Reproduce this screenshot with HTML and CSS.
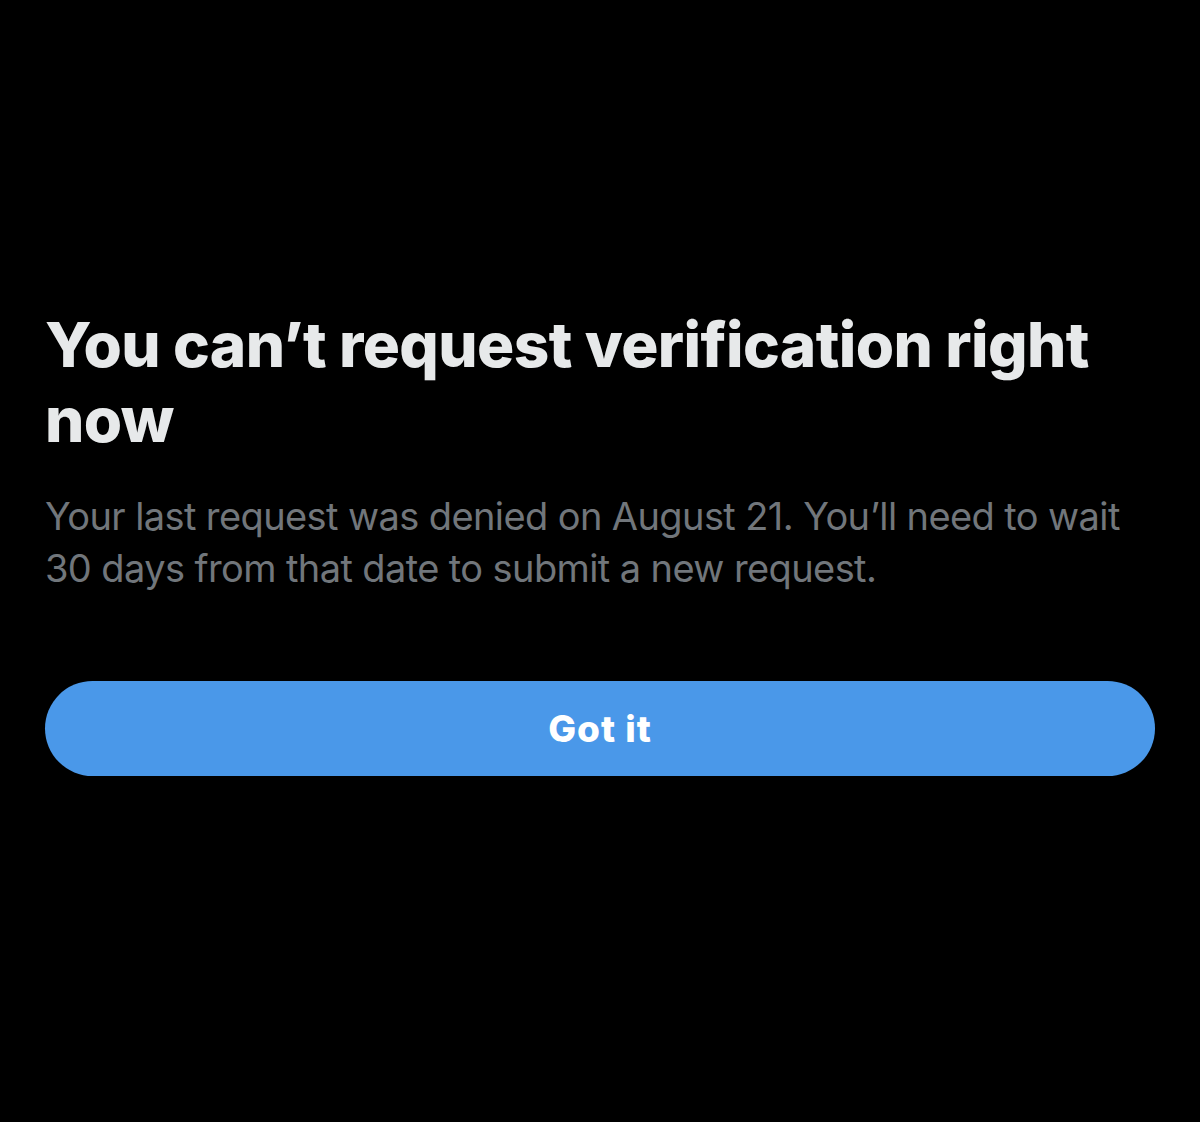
FILE: index.html
```html
<!DOCTYPE html>
<html lang="en">
  <head>
    <meta charset="UTF-8" />
    <title>Verification</title>
    <meta name="viewport" content="width=device-width, initial-scale=1.0" />
    <link rel="stylesheet" href="styles.css">
  </head>
  <body>
    <div class="vr-sheet">
      <h1 class="vr-title">You can’t request verification right now</h1>
      <p class="vr-text">
        Your last request was denied on August 21. You’ll need to wait 30 days
        from that date to submit a new request.
      </p>
      <button class="vr-btn">Got it</button>
    </div>
  </body>
</html>
```

FILE: styles.css
```css
html,
body {
  margin: 0;
  background: #000;
}
.vr-sheet {
  display: flex;
  flex-direction: column;
  padding: 307px 45px 0 45px;
  font-family: "Inter", "Liberation Sans", sans-serif;
}
.vr-title {
  margin: 0;
  color: #e7e9ea;
  font-size: 62px;
  line-height: 75px;
  font-weight: 800;
  letter-spacing: -0.6px;
}
.vr-text {
  margin: 33px 0 0 0;
  color: #71767b;
  font-size: 38px;
  line-height: 52px;
  font-weight: 400;
  letter-spacing: -0.6px;
}
.vr-btn {
  margin-top: 87px;
  height: 95px;
  border: none;
  border-radius: 48px;
  background: #4a98e9;
  color: #fff;
  font-family: inherit;
  font-size: 37px;
  font-weight: 800;
  letter-spacing: 1px;
}
```
